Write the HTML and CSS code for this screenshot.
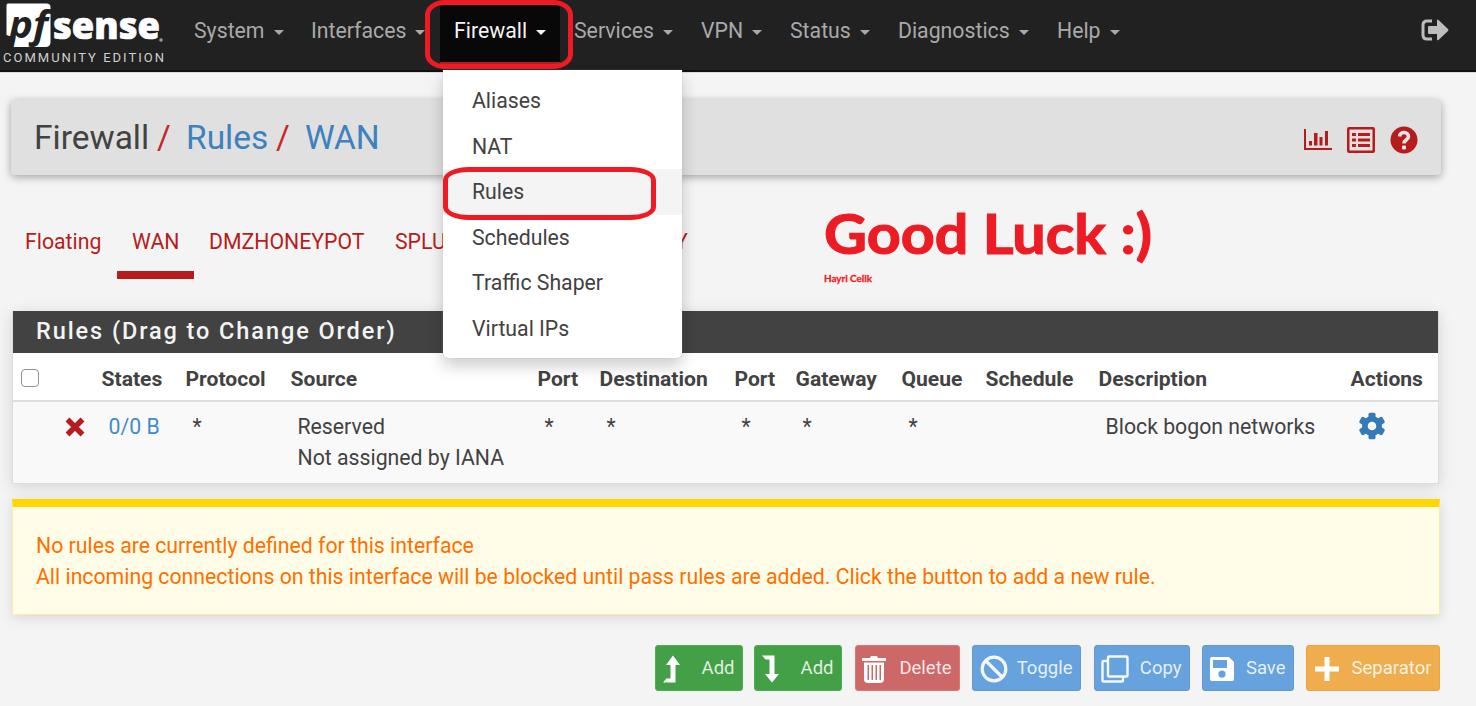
FILE: index.html
```html
<!DOCTYPE html>
<html lang="en">
<head>
<meta charset="utf-8">
<title>Firewall: Rules: WAN</title>
<link rel="stylesheet" href="styles.css">
</head>
<body>
<header class="navbar">
  <a class="brand">
    <svg width="180" height="70" viewBox="0 0 180 70">
      <path d="M8 3.500H46.500Q50.500 3.500 50.500 7V42Q50.500 47 45.500 47H10.500L12.500 37L6.500 35V5Q6.500 3.500 8 3.500Z" fill="#fff"/>
      <text class="logo-pf" x="9" y="38" textLength="39" lengthAdjust="spacingAndGlyphs">pf</text>
      <text class="logo-sense" x="53" y="39" textLength="107" lengthAdjust="spacingAndGlyphs">sense</text>
      <circle cx="161" cy="40" r="1.800" fill="#999"/>
      <text class="logo-ce" x="3" y="62" textLength="161">COMMUNITY EDITION</text>
    </svg>
  </a>
  <nav class="menu">
    <a class="item system">System<i class="caret"></i></a>
    <a class="item interfaces">Interfaces<i class="caret"></i></a>
    <div class="item firewall">Firewall<i class="caret"></i>
      <div class="dropdown">
        <a>Aliases</a><a>NAT</a><a class="hover">Rules</a><a>Schedules</a><a>Traffic Shaper</a><a>Virtual IPs</a>
        <span class="mark mark-rules"></span>
      </div>
      <span class="mark mark-firewall"></span>
    </div>
    <a class="item services">Services<i class="caret"></i></a>
    <a class="item vpn">VPN<i class="caret"></i></a>
    <a class="item status">Status<i class="caret"></i></a>
    <a class="item diagnostics">Diagnostics<i class="caret"></i></a>
    <a class="item help">Help<i class="caret"></i></a>
  </nav>
  <svg class="logout" width="28" height="22" viewBox="0 0 28 22"><path d="M11 2H6Q2 2 2 6V16Q2 20 6 20H11" fill="none" stroke="#bdbdbd" stroke-width="3"/><path d="M8 7H16V1.500Q16 0 17.500 1L27 10Q28 11 27 12L17.500 21Q16 22 16 20V15H8Q7 15 7 14V8Q7 7 8 7Z" fill="#bdbdbd"/></svg>
</header>

<main>
  <section class="title-bar">
    <h1><span class="t1">Firewall</span><b class="s1">/</b><a class="t2">Rules</a><b class="s2">/</b><a class="t3">WAN</a></h1>
    <div class="title-icons">
      <svg width="28" height="24" viewBox="0 0 28 24" fill="#b71c1c"><path d="M0 1H2V20H28V22H0ZM5 13H8V17.500H5ZM10 5H13.500V17.500H10ZM15.500 9H18.500V17.500H15.500ZM21 3H24V17.500H21Z"/></svg>
      <svg width="28" height="26" viewBox="0 0 28 26" fill="#b71c1c"><path fill-rule="evenodd" d="M2 0H26Q28 0 28 2V24Q28 26 26 26H2Q0 26 0 24V2Q0 0 2 0ZM2.500 2.500V23.500H25.500V2.500Z"/><path d="M5 6H9V9H5ZM11 6H23V9H11ZM5 11.500H9V14.500H5ZM11 11.500H23V14.500H11ZM5 17H9V20H5ZM11 17H23V20H11Z"/></svg>
      <svg width="28" height="28" viewBox="0 0 28 28"><circle cx="14" cy="14" r="13.500" fill="#b71c1c"/><path d="M9.500 10.500C10 5 18.500 5.500 18.500 10.500C18.500 14 14 13.500 14 17.500" fill="none" stroke="#e4e4e4" stroke-width="3.600"/><rect x="12" y="19.500" width="4" height="4" rx="1" fill="#e4e4e4"/></svg>
    </div>
  </section>

  <div class="tabs-row">
    <nav class="tabs"><a class="floating">Floating</a><a class="active">WAN</a><a class="dmz">DMZHONEYPOT</a><a class="splu">SPLU</a><a>Y</a></nav>
    <div class="greeting"><svg width="340" height="90" viewBox="0 0 340 90"><text class="big" x="3" y="53" textLength="328" lengthAdjust="spacingAndGlyphs">Good Luck :)</text><text class="small" x="3" y="81" textLength="48" lengthAdjust="spacingAndGlyphs">Hayri Celik</text></svg></div>
  </div>

  <section class="panel">
    <h2>Rules (Drag to Change Order)</h2>
    <table>
      <colgroup><col class="c0"><col class="c1"><col class="c2"><col class="c3"><col class="c4"><col class="c5"><col class="c6"><col class="c7"><col class="c8"><col class="c9"><col class="c10"><col class="c11"><col class="c12"></colgroup>
      <thead><tr><th><span class="check"></span></th><th></th><th>States</th><th>Protocol</th><th>Source</th><th>Port</th><th>Destination</th><th>Port</th><th>Gateway</th><th>Queue</th><th>Schedule</th><th>Description</th><th>Actions</th></tr></thead>
      <tbody><tr><td></td><td class="icon-cell"><svg width="20" height="20" viewBox="0 0 20 20"><path d="M2.500 2.500L17.500 17.500M17.500 2.500L2.500 17.500" stroke="#b71c1c" stroke-width="5.400"/></svg></td><td><a>0/0 B</a></td><td>*</td><td>Reserved<br>Not assigned by IANA</td><td>*</td><td>*</td><td>*</td><td>*</td><td>*</td><td></td><td>Block bogon networks</td>
      <td><svg class="gear" width="28" height="28" viewBox="-14 -14 28 28"><g fill="#337ab7"><circle r="10"/><rect x="-3.500" y="-13.300" width="7" height="26.600" rx="1.500"/><rect x="-3.500" y="-13.300" width="7" height="26.600" rx="1.500" transform="rotate(60)"/><rect x="-3.500" y="-13.300" width="7" height="26.600" rx="1.500" transform="rotate(120)"/></g><circle r="4.300" fill="#f9f9f9"/></svg></td></tr></tbody>
    </table>
  </section>

  <section class="alert">No rules are currently defined for this interface<br>All incoming connections on this interface will be blocked until pass rules are added. Click the button to add a new rule.</section>

  <div class="actions">
    <button class="green add"><svg width="20" height="30" viewBox="0 0 20 30"><path d="M0 28.500L3.500 24.500H7.500V11H3L10 1.500L17 11H12.500V28.500Z" fill="#fff"/></svg>Add</button>
    <button class="green add add2"><svg width="20" height="30" viewBox="0 0 20 30"><path d="M0 1.500H12.500V20H17L10 28.500L3 20H7.500V5.500H3.500Z" fill="#fff"/></svg>Add</button>
    <button class="red"><svg width="26" height="30" viewBox="0 0 26 30"><path d="M1 4H9L10 2H16L17 4H25V7H1Z" fill="#fff"/><path fill-rule="evenodd" d="M3 8.500H23V25Q23 29 19 29H7Q3 29 3 25ZM6.500 11V26H8V11ZM10.500 11V26H12V11ZM14.500 11V26H16V11ZM18.500 11V26H20V11Z" fill="#fff"/></svg>Delete</button>
    <button class="blue toggle"><svg width="28" height="28" viewBox="0 0 28 28" fill="none" stroke="#f4f8fc" stroke-width="3.200"><circle cx="14" cy="14" r="11.800"/><path d="M6 6L22 22"/></svg>Toggle</button>
    <button class="blue copy"><svg width="28" height="28" viewBox="0 0 28 28" fill="none" stroke="#f4f8fc" stroke-width="2.400"><rect x="7" y="1.500" width="19.500" height="20" rx="1"/><path d="M7 6H2.500Q1.500 6 1.500 7V25.500Q1.500 26.500 2.500 26.500H21Q22 26.500 22 25.500V22"/></svg>Copy</button>
    <button class="blue save"><svg width="26" height="26" viewBox="0 0 26 26"><path fill-rule="evenodd" d="M3 1H20L25 6V23Q25 25 23 25H3Q1 25 1 23V3Q1 1 3 1ZM4 4V12H18V4ZM13 14.500A3.600 3.600 0 1 0 13 21.700A3.600 3.600 0 1 0 13 14.500Z" fill="#fff"/></svg>Save</button>
    <button class="orange"><svg width="26" height="26" viewBox="0 0 26 26"><path d="M10.500 1H15.500V10.500H25V15.500H15.500V25H10.500V15.500H1V10.500H10.500Z" fill="#fff"/></svg>Separator</button>
  </div>
</main>
</body>
</html>
```
FILE: styles.css
```css
* { box-sizing: border-box; }
body { margin: 0; width: 1476px; height: 706px; overflow: hidden; background: #f4f4f4; color: #424242; font: 21.260px/31px Roboto, sans-serif; }
a { color: inherit; text-decoration: none; }
.navbar { display: flex; height: 72px; background: #212121; border-bottom: 2px solid #101010; box-shadow: 0 0 1px #555; position: relative; z-index: 2; }
.brand { width: 180px; }
.brand svg { display: block; }
.logo-pf { font: italic 700 37px "Open Sans", sans-serif; fill: #212121; }
.logo-sense { font: 800 37px "Open Sans", sans-serif; fill: #fff; stroke: #fff; stroke-width: .7px; }
.logo-ce { font: 400 13px Roboto, sans-serif; fill: #d0d0d0; }
.menu { display: flex; flex: 1; }
.item { display: flex; align-items: center; height: 62px; padding: 0 0 2px 14px; color: #a9a9a9; flex: none; }
.caret { margin: 5px 0 0 9px; border: 5.500px solid transparent; border-top-color: currentColor; border-bottom: 0; }
.system { width: 117px; }
.interfaces { width: 143px; }
.firewall { width: 120px; position: relative; background: #080808; color: #f4f4f4; box-shadow: 0 5px #b71c1c; }
.services { width: 127px; }
.vpn { width: 89px; }
.status { width: 108px; }
.diagnostics { width: 159px; }
.logout { margin: 19px 27px 0 0; }
.dropdown { position: absolute; left: 2.500px; top: 70px; width: 239px; height: 288px; padding: 8px 0 7px; background: #fff; color: #424242; border-radius: 0 0 5px 5px; box-shadow: 0 0 1px #aaa, 0 8px 16px rgba(0,0,0,.2); }
.dropdown a { display: block; height: 45.600px; padding-left: 29.500px; line-height: 46.500px; }
.dropdown .hover { background: #f4f4f4; }
.mark { position: absolute; border: 5px solid #ed1c24; }
.mark-firewall { left: -15px; top: 0; width: 148px; height: 69px; border-radius: 19px / 15px; z-index: 3; }
.mark-rules { left: .400px; top: 97px; width: 213px; height: 53px; border-radius: 26px / 13px; }
main { padding: 28px 35px 0 11px; }
.title-bar { display: flex; justify-content: space-between; align-items: center; width: 1430px; height: 75px; padding: 2px 23px 1px; background: #e0e0e0; border-radius: 4px; box-shadow: 0 2px 9px rgba(0,0,0,.35); }
h1 { display: flex; margin: 0; font: 400 33.500px/40px Roboto, sans-serif; }
h1 a { color: #3d82bf; }
h1 b { font-weight: 400; color: #c62828; }
.t1 { width: 123px; }
.s1 { width: 29px; }
.t2 { width: 90px; }
.s2 { width: 29px; }
.title-icons { display: flex; align-items: center; gap: 15px; padding-top: 3px; }
.tabs-row { display: flex; justify-content: space-between; height: 136px; }
.tabs { display: flex; height: 104px; padding: 35px 0 0 14px; color: #b71c1c; }
.tabs a { height: 69px; padding-top: 16px; }
.floating { width: 92px; }
.tabs .active { width: 77px; padding-left: 15px; border-bottom: 8px solid #b71c1c; }
.dmz { width: 201px; padding-left: 15px; }
.splu { width: 280px; }
.greeting { width: 620px; padding-top: 26px; }
.greeting svg { display: block; }
.big { font: 700 56px Lato, sans-serif; fill: #ed1c24; stroke: #ed1c24; stroke-width: 1.200px; }
.small { font: 700 9.500px Lato, sans-serif; fill: #ed1c24; stroke: #ed1c24; stroke-width: .3px; }
.panel { width: 1427px; margin-left: 1px; height: 173px; border: 1px solid #ddd; border-top: 0; box-shadow: 0 3px 14px rgba(0,0,0,.13); background: #f9f9f9; }
h2 { margin: 0; height: 42px; padding-left: 23px; background: #424242; color: #f4f4f4; font: 500 23.500px/41px Roboto, sans-serif; letter-spacing: 1.920px; }
table { width: 1425px; table-layout: fixed; border-collapse: separate; border-spacing: 0; }
th { height: 49px; padding: 3px 0 0 7.500px; text-align: left; font-size: 21.100px; font-weight: 700; background: #fff; border-bottom: 2px solid #ddd; white-space: nowrap; }
td { padding: 10px 0 0 14.500px; vertical-align: top; white-space: nowrap; line-height: 30.500px; }
td a { color: #428bca; }
.icon-cell { padding-left: 7.500px; }
.icon-cell svg { display: block; margin-top: 5px; }
.gear { display: block; margin: 0; }
.check { display: block; width: 18px; height: 18px; border: 1.500px solid #8f8f9d; border-radius: 4px; background: #fff; }
.c0 { width: 44px; }
.c1 { width: 37px; }
.c2 { width: 84px; }
.c3 { width: 105px; }
.c4 { width: 247px; }
.c5 { width: 62px; }
.c6 { width: 135px; }
.c7 { width: 61px; }
.c8 { width: 106px; }
.c9 { width: 84px; }
.c10 { width: 113px; }
.c11 { width: 252px; }
.c12 { width: 95px; }
.alert { width: 1428px; height: 116px; margin: 15px 0 0 1px; padding: 24px 23px 22px; background: #fffde7; border: 1px solid #ffe9a8; border-top: 8px solid #ffd600; color: #ff6f00; box-shadow: 0 3px 12px rgba(0,0,0,.12); white-space: nowrap; line-height: 30.500px; }
.actions { display: flex; justify-content: flex-end; margin: 30px 1px 0 0; height: 46px; }
button { display: flex; align-items: center; justify-content: space-between; height: 46px; margin-left: 12px; padding: 0 7.500px 0 7px; border: 1px solid; border-radius: 3px; color: rgba(255,255,255,.85); font: 400 18.500px/30px Roboto, sans-serif; }
button svg { position: relative; top: 1px; }
.green { width: 88px; background: #43a047; border-color: #4caf50; }
.add2 { margin-left: 11px; }
.red { width: 105px; margin-left: 13px; padding-left: 5px; background: #cd6868; border-color: #e57373; }
.blue { background: #66a2de; border-color: #6699c5; }
.toggle { width: 109px; }
.copy { width: 96px; margin-left: 13px; padding-left: 6px; }
.save { width: 92px; padding-left: 6px; }
.orange { width: 134px; background: #f0ad4e; border-color: #eea236; }
```
